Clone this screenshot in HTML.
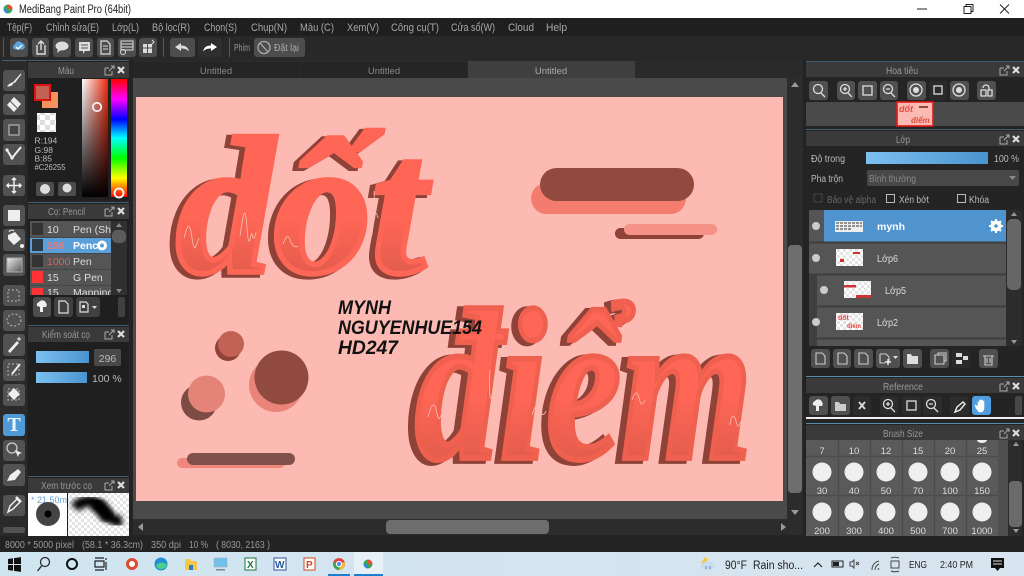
<!DOCTYPE html>
<html><head><meta charset="utf-8"><title>MediBang Paint Pro</title>
<style>
html,body{margin:0;padding:0;width:1024px;height:576px;overflow:hidden;background:#222}
svg{display:block;position:absolute;left:0;top:0}
svg.root{filter:blur(.35px)}
text{font-family:"Liberation Sans","Noto Sans CJK SC",sans-serif;font-size:11px;fill:#a8a8a8}
.h{fill:#9a9a9a;text-anchor:middle;font-size:10px}
.tk{fill:#222;font-size:11.5px}
.n{fill:#ddd;font-size:9.5px;text-anchor:middle}
</style></head><body>
<svg class="root" width="1024" height="576" viewBox="0 0 1024 576" xmlns="http://www.w3.org/2000/svg">
<defs>
<linearGradient id="bl" x1="0" y1="0" x2="1" y2="0"><stop offset="0" stop-color="#7cc0f0"/><stop offset="1" stop-color="#4a94cf"/></linearGradient>
<linearGradient id="sat" x1="0" y1="0" x2="1" y2="0"><stop offset="0" stop-color="#fff"/><stop offset="1" stop-color="#f02a10"/></linearGradient>
<linearGradient id="blk" x1="0" y1="0" x2="0" y2="1"><stop offset="0" stop-color="#000" stop-opacity="0"/><stop offset="1" stop-color="#000"/></linearGradient>
<linearGradient id="hue" x1="0" y1="0" x2="0" y2="1"><stop offset="0" stop-color="#f00"/><stop offset=".17" stop-color="#f0f"/><stop offset=".34" stop-color="#00f"/><stop offset=".5" stop-color="#0ff"/><stop offset=".67" stop-color="#0f0"/><stop offset=".84" stop-color="#ff0"/><stop offset="1" stop-color="#f00"/></linearGradient>
<linearGradient id="g1" x1="0" y1="0" x2="0" y2="1"><stop offset=".55" stop-color="#ff6655"/><stop offset="1" stop-color="#cf5547"/></linearGradient>
<linearGradient id="gr" x1="0" y1="0" x2="1" y2="1"><stop offset="0" stop-color="#eee"/><stop offset="1" stop-color="#555"/></linearGradient>
<linearGradient id="task" x1="0" y1="0" x2="1" y2="0"><stop offset="0" stop-color="#cfe5f0"/><stop offset="1" stop-color="#d8e4ef"/></linearGradient>
<pattern id="chk" width="10" height="10" patternUnits="userSpaceOnUse"><rect width="10" height="10" fill="#fff"/><rect width="5" height="5" fill="#ddd"/><rect x="5" y="5" width="5" height="5" fill="#ddd"/></pattern>
<pattern id="chk2" width="6" height="6" patternUnits="userSpaceOnUse"><rect width="6" height="6" fill="#fff"/><rect width="3" height="3" fill="#e4e4e4"/><rect x="3" y="3" width="3" height="3" fill="#e4e4e4"/></pattern>
<filter id="bl3" x="-20%" y="-20%" width="140%" height="140%"><feGaussianBlur stdDeviation="2.6"/></filter>
<symbol id="pop" overflow="visible"><path d="M0 2h4M0 2v7h7V5M4 5l5-5M6 0h3v3" fill="none" stroke="#aaa" stroke-width="1"/><path d="M13 1l6 6M19 1l-6 6" stroke="#ddd" stroke-width="2.2"/></symbol>
</defs>

<!-- base -->
<rect width="1024" height="576" fill="#232323"/>
<!-- title bar -->
<rect width="1024" height="18" fill="#fff"/>
<circle cx="8" cy="9" r="4.500" fill="#3aa655"/><path d="M8 4.500a4.500 4.500 0 0 1 4.500 4.500H8z" fill="#e8503a"/><path d="M3.500 9a4.500 4.500 0 0 0 4.500 4.500V9z" fill="#2f8fd0"/>
<text x="19" y="13" textLength="112" lengthAdjust="spacingAndGlyphs" style="fill:#222;font-size:11.500px">MediBang Paint Pro (64bit)</text>
<path d="M917 9h10" stroke="#222"/><path d="M964 6.500h7v7h-7zM966 6.500v-2h7v7h-2" fill="none" stroke="#222"/><path d="M1000 4.500l9 9M1009 4.500l-9 9" stroke="#222"/>

<!-- menu -->
<rect y="18" width="1024" height="18" fill="#1f1f1f"/>
<text x="7" y="31" textLength="25" lengthAdjust="spacingAndGlyphs">Tệp(F)</text><text x="46" y="31" textLength="53" lengthAdjust="spacingAndGlyphs">Chỉnh sửa(E)</text><text x="112" y="31" textLength="27" lengthAdjust="spacingAndGlyphs">Lớp(L)</text><text x="152" y="31" textLength="38" lengthAdjust="spacingAndGlyphs">Bộ lọc(R)</text><text x="204" y="31" textLength="33" lengthAdjust="spacingAndGlyphs">Chọn(S)</text><text x="251" y="31" textLength="36" lengthAdjust="spacingAndGlyphs">Chụp(N)</text><text x="300" y="31" textLength="34" lengthAdjust="spacingAndGlyphs">Màu (C)</text><text x="347" y="31" textLength="32" lengthAdjust="spacingAndGlyphs">Xem(V)</text><text x="391" y="31" textLength="48" lengthAdjust="spacingAndGlyphs">Công cụ(T)</text><text x="451" y="31" textLength="44" lengthAdjust="spacingAndGlyphs">Cửa sổ(W)</text><text x="508" y="31" textLength="26" lengthAdjust="spacingAndGlyphs">Cloud</text><text x="546" y="31" textLength="21" lengthAdjust="spacingAndGlyphs">Help</text>

<!-- toolbar -->
<rect y="36" width="1024" height="24" fill="#282828"/>
<path d="M3.500 38v19M163.500 38v19M229.500 38v19" stroke="#3d5f78"/>
<g fill="#4d4d4d">
<rect x="10" y="38" width="18" height="19" rx="3"/><rect x="32" y="38" width="17" height="19" rx="3"/><rect x="53" y="38" width="18" height="19" rx="3"/><rect x="75" y="38" width="18" height="19" rx="3"/><rect x="97" y="38" width="17" height="19" rx="3"/><rect x="118" y="38" width="18" height="19" rx="3"/><rect x="139" y="38" width="18" height="19" rx="3"/><rect x="170" y="38" width="25" height="19" rx="3"/><rect x="198" y="38" width="24" height="19" rx="3" fill="#2f2f2f"/><rect x="254" y="38" width="51" height="19" rx="3"/>
</g>
<path d="M14 49a3 3 0 0 1 1-5 4 4 0 0 1 7-1 3.500 3.500 0 0 1 1 6.500H16z" fill="#5aa5e0"/><path d="M16 47l2 2 4-4" stroke="#fff" fill="none" stroke-width="1.400"/>
<path d="M37 45v9h8v-9M41 50v-9M38 44l3-3 3 3" fill="none" stroke="#ddd" stroke-width="1.400"/>
<ellipse cx="62" cy="46" rx="6.500" ry="4.500" fill="#ddd"/><path d="M58 49l-1 4 4-3z" fill="#ddd"/>
<path d="M79 42h11v9h-5l-2 3v-3h-4z" fill="#ddd"/><path d="M81 45h7M81 48h7" stroke="#555"/>
<path d="M101 41h6l3 3v10h-9z" fill="none" stroke="#ddd" stroke-width="1.200"/><path d="M103 46h5M103 49h5" stroke="#ddd"/>
<path d="M121 41h12v9h-12zM121 44h12M121 47h12" fill="none" stroke="#ddd"/><circle cx="123" cy="52" r="2.500" fill="none" stroke="#ddd"/>
<path d="M143 44h9v9h-9z" fill="#ddd"/><path d="M147.500 44v9M143 48h9" stroke="#4d4d4d"/><path d="M152 40l2 2-3 3" stroke="#ddd" fill="none"/>
<path d="M175 47l6-4v2.500c5 0 7 2 8 6-2-2-4-3-8-3V51z" fill="#ddd"/>
<path d="M217 47l-6-4v2.500c-5 0-7 2-8 6 2-2 4-3 8-3V51z" fill="#fff"/>
<text x="234" y="51" textLength="16" lengthAdjust="spacingAndGlyphs" style="font-size:10px;fill:#999">Phím</text>
<circle cx="264" cy="47.500" r="6" fill="none" stroke="#aaa" stroke-width="1.300"/><path d="M260 43l8 9" stroke="#aaa" stroke-width="1.300"/>
<text x="274" y="51" textLength="25" lengthAdjust="spacingAndGlyphs" style="font-size:10px;fill:#aaa">Đặt lại</text>

<!-- left tool column -->
<rect x="0" y="60" width="27" height="476" fill="#2a2a2a"/>
<rect x="2" y="60" width="25" height="1" fill="#3d5f78"/>
<g fill="#525252">
<rect x="3" y="70" width="22" height="21" rx="3"/><rect x="3" y="94" width="22" height="21" rx="3"/><rect x="3" y="119" width="22" height="22" rx="3"/><rect x="3" y="144" width="22" height="21" rx="3"/><rect x="3" y="175" width="22" height="21" rx="3"/><rect x="3" y="205" width="22" height="21" rx="3"/><rect x="3" y="229" width="22" height="22" rx="3"/><rect x="3" y="254" width="22" height="22" rx="3"/><rect x="3" y="285" width="22" height="21" rx="3"/><rect x="3" y="310" width="22" height="21" rx="3"/><rect x="3" y="334" width="22" height="22" rx="3"/><rect x="3" y="359" width="22" height="22" rx="3"/><rect x="3" y="384" width="22" height="22" rx="3"/><rect x="3" y="414" width="22" height="22" rx="3" fill="#4f9ad6"/><rect x="3" y="440" width="22" height="21" rx="3"/><rect x="3" y="464" width="22" height="22" rx="3"/><rect x="3" y="495" width="22" height="21" rx="3"/><rect x="3" y="527" width="22" height="6" rx="2"/>
</g>
<path d="M8 86c3 0 4-1 5-3l8-9-6 8c-2 1-5 1-7 4z" fill="#eee" stroke="#eee"/>
<path d="M14 97l7 7-7 8-7-7z" fill="#eee"/><path d="M10 101l7 7" stroke="#555"/>
<rect x="9" y="125" width="10" height="10" fill="#444" stroke="#aaa" stroke-width="1.300"/>
<path d="M7 150l5 8 9-11" fill="none" stroke="#eee" stroke-width="2"/><circle cx="7" cy="150" r="1.600" fill="#eee"/><circle cx="12" cy="158" r="1.600" fill="#eee"/>
<path d="M14 178v15M7 185.500h14M12 180l2-2 2 2M12 191l2 2 2-2M9 183.500l-2 2 2 2M19 183.500l2 2-2 2" fill="none" stroke="#eee" stroke-width="1.500"/>
<rect x="8" y="210" width="12" height="11" fill="#eee"/>
<path d="M8 235l7-3 6 7-7 6-6-6z" fill="#eee"/><path d="M9 232a3 3 0 0 1 5-1" fill="none" stroke="#eee"/><circle cx="22" cy="246" r="2" fill="#eee"/>
<rect x="7" y="258" width="15" height="14" fill="url(#gr)" stroke="#aaa"/>
<rect x="8" y="290" width="11" height="11" fill="none" stroke="#bbb" stroke-dasharray="2 2"/>
<ellipse cx="14" cy="320" rx="7" ry="6" fill="none" stroke="#bbb" stroke-dasharray="2 2"/>
<path d="M8 351l9-10 2 2-9 10z" fill="#eee"/><path d="M19 337v4M17 339h4" stroke="#eee"/>
<rect x="8" y="364" width="11" height="11" fill="none" stroke="#bbb" stroke-dasharray="2 2"/><path d="M12 374l8-10" stroke="#eee" stroke-width="2"/>
<rect x="8" y="389" width="11" height="11" fill="none" stroke="#bbb" stroke-dasharray="2 2"/><path d="M14 388l6 6-6 6-6-6z" fill="#eee"/>
<text x="14" y="431" text-anchor="middle" style="font-family:'Liberation Serif',serif;font-size:20px;font-weight:bold;fill:#e8f2fa">T</text>
<circle cx="12" cy="448" r="5" fill="none" stroke="#ccc" stroke-width="1.300"/><path d="M15 450l7 3-3 1-1 3z" fill="#eee"/>
<path d="M7 481l3-6 8-6 3 3-6 8z" fill="#eee"/>
<path d="M8 512l2-6 7-7 3 3-7 7z" fill="none" stroke="#eee" stroke-width="1.500"/><path d="M16 497l5 5" stroke="#eee" stroke-width="2.500"/>

<!-- color panel -->
<rect x="28" y="60" width="101" height="140" fill="#1f1f1f"/>
<rect x="28" y="62" width="101" height="16" fill="#3a3a3a"/><rect x="28" y="60" width="101" height="1" fill="#3d5f78"/>
<text x="58" y="74" textLength="16" lengthAdjust="spacingAndGlyphs" style="font-size:10px;fill:#999">Màu</text><use href="#pop" x="105" y="66"/>
<rect x="42" y="92" width="16" height="16" fill="#f6925e"/>
<rect x="35" y="85" width="15" height="15" fill="#c26255" stroke="#e01010" stroke-width="2"/>
<rect x="37" y="113" width="19" height="19" fill="url(#chk)"/>
<text x="34.500" y="143.500" style="font-size:8.500px;fill:#bbb">R:194</text><text x="34.500" y="153" style="font-size:8.500px;fill:#bbb">G:98</text><text x="34.500" y="161.500" style="font-size:8.500px;fill:#bbb">B:85</text><text x="34.500" y="170" textLength="31" lengthAdjust="spacingAndGlyphs" style="font-size:8.500px;fill:#bbb">#C26255</text>
<rect x="36" y="182" width="18" height="14" rx="2" fill="#4d4d4d"/><rect x="58" y="182" width="18" height="14" rx="2" fill="#4d4d4d"/>
<circle cx="45" cy="189" r="5" fill="#ddd"/><circle cx="67" cy="188" r="4.500" fill="#ddd"/>
<rect x="82" y="79" width="26" height="118" fill="url(#sat)"/><rect x="82" y="79" width="26" height="118" fill="url(#blk)"/>
<rect x="111" y="79" width="16" height="118" fill="url(#hue)"/>
<circle cx="97" cy="107" r="4.200" fill="none" stroke="#eee" stroke-width="1.800"/>
<circle cx="119" cy="193" r="4.500" fill="none" stroke="#eee" stroke-width="2"/>

<!-- brush panel -->
<rect x="28" y="202" width="101" height="120" fill="#1f1f1f"/>
<rect x="28" y="204" width="101" height="15" fill="#3a3a3a"/><rect x="28" y="202" width="101" height="1" fill="#3d5f78"/>
<text x="48" y="215" textLength="37" lengthAdjust="spacingAndGlyphs" style="font-size:10px;fill:#999">Cọ: Pencil</text><use href="#pop" x="105" y="207"/>
<rect x="30" y="221" width="81" height="74" fill="#555"/>
<rect x="30" y="238" width="81" height="15" fill="#5a9fd8"/>
<path d="M30 237.500h81M30 253.500h81M30 269.500h81M30 285.500h81" stroke="#444"/>
<rect x="32" y="223" width="11" height="12" fill="#333"/><rect x="32" y="239" width="11" height="12" fill="#2d3a45"/><rect x="32" y="255" width="11" height="12" fill="#333"/><rect x="32" y="271" width="11" height="12" fill="#f33"/><rect x="32" y="288" width="11" height="7" fill="#f33"/>
<text x="47" y="233" style="fill:#ddd;font-size:10.500px">10</text><text x="73" y="233" style="fill:#ddd;font-size:10.500px">Pen (Sha</text>
<text x="47" y="249" style="fill:#e77;font-size:10.500px;font-weight:bold">296</text><text x="73" y="249" style="fill:#fff;font-size:10.500px;font-weight:bold">Penci</text><circle cx="102" cy="245.500" r="5" fill="#fff"/><circle cx="102" cy="245.500" r="2" fill="#5a9fd8"/>
<text x="47" y="265" style="fill:#c66;font-size:10.500px">1000</text><text x="73" y="265" style="fill:#ddd;font-size:10.500px">Pen</text>
<text x="47" y="281" style="fill:#ddd;font-size:10.500px">15</text><text x="73" y="281" style="fill:#ddd;font-size:10.500px">G Pen</text>
<svg x="30" y="287" width="81" height="8"><text x="17" y="9" style="fill:#ddd;font-size:10.500px">15</text><text x="43" y="9" style="fill:#ddd;font-size:10.500px">Mapping</text></svg>
<rect x="111" y="221" width="16" height="74" fill="#303030"/><rect x="112" y="230" width="14" height="13" rx="5" fill="#5c5c5c"/><path d="M119 223l-3 4h6zM119 293l-3-4h6z" fill="#888"/>
<rect x="33" y="297" width="18" height="20" rx="3" fill="#4d4d4d"/><rect x="54" y="297" width="19" height="20" rx="3" fill="#404040"/><rect x="76" y="297" width="24" height="20" rx="3" fill="#404040"/><rect x="118" y="297" width="7" height="20" rx="2" fill="#404040"/>
<path d="M37 306a3 3 0 0 1 2-4 4 4 0 0 1 7 1 3 3 0 0 1 0 4h-3v5h-3v-5z" fill="#eee"/>
<path d="M59 301h6l3 3v9h-9z" fill="none" stroke="#ddd" stroke-width="1.200"/>
<path d="M80 302h6l2 2v8h-8z" fill="none" stroke="#ddd" stroke-width="1.200"/><rect x="82" y="305" width="3" height="3" fill="#ddd"/><path d="M92 306h5l-2.500 3z" fill="#ddd"/>

<!-- brush control -->
<rect x="28" y="324" width="101" height="152" fill="#1f1f1f"/>
<rect x="28" y="327" width="101" height="15" fill="#3a3a3a"/><rect x="28" y="325" width="101" height="1" fill="#3d5f78"/>
<text x="42" y="338" textLength="48" lengthAdjust="spacingAndGlyphs" style="font-size:10px;fill:#999">Kiểm soát cọ</text><use href="#pop" x="105" y="330"/>
<rect x="36" y="351" width="53" height="12" fill="url(#bl)"/><rect x="94" y="349" width="27" height="17" rx="2" fill="#484848"/><text x="107.500" y="362" text-anchor="middle" style="fill:#bbb;font-size:10.500px">296</text>
<rect x="36" y="372" width="51" height="11" fill="url(#bl)"/><text x="92" y="382" style="fill:#bbb;font-size:10.500px">100 %</text>

<!-- preview -->
<rect x="28" y="476" width="101" height="60" fill="#1f1f1f"/>
<rect x="28" y="478" width="101" height="15" fill="#3a3a3a"/><rect x="28" y="476" width="101" height="1" fill="#3d5f78"/>
<text x="41" y="489" textLength="51" lengthAdjust="spacingAndGlyphs" style="font-size:10px;fill:#999">Xem trước cọ</text><use href="#pop" x="105" y="481"/>
<rect x="28" y="493" width="39" height="43" fill="#fff"/><rect x="68" y="493" width="61" height="43" fill="url(#chk2)"/>
<svg x="28" y="493" width="39" height="14"><text x="3" y="10" style="font-size:9px;fill:#6aa5d8">* 21.50m</text></svg>
<circle cx="48" cy="514" r="12" fill="#444"/><circle cx="48" cy="514" r="3.500" fill="#000"/>
<path d="M75 508c8-10 22-8 27 0s12 14 20 13" fill="none" stroke="#000" stroke-width="11" filter="url(#bl3)"/>
<path d="M92 503c8 2 12 10 18 16" fill="none" stroke="#000" stroke-width="13" filter="url(#bl3)"/>

<!-- center workspace -->
<rect x="133" y="60" width="670" height="18" fill="#2a2a2a"/>
<rect x="133" y="62" width="167" height="16" fill="#252525"/><rect x="301" y="62" width="166" height="16" fill="#252525"/><rect x="468" y="61" width="167" height="17" fill="#3f3f3f"/>
<text x="216" y="74" text-anchor="middle" style="font-size:9.500px;fill:#888">Untitled</text><text x="384" y="74" text-anchor="middle" style="font-size:9.500px;fill:#888">Untitled</text><text x="551" y="74" text-anchor="middle" style="font-size:9.500px;fill:#aaa">Untitled</text>
<rect x="133" y="78" width="670" height="441" fill="#4a4a4a"/>
<rect x="133" y="519" width="655" height="16" fill="#2c2c2c"/><rect x="386" y="520" width="163" height="14" rx="4" fill="#6e6e6e"/><path d="M138 527l5-4v8zM786 527l-5-4v8z" fill="#999"/>
<rect x="787" y="78" width="16" height="457" fill="#2c2c2c"/><rect x="788" y="245" width="14" height="248" rx="4" fill="#6e6e6e"/><path d="M795 82l-4 5h8zM795 515l-4-5h8z" fill="#999"/>

<!-- canvas art -->
<rect x="136" y="97" width="647" height="404" fill="#fdbab3"/>
<rect x="531" y="183" width="155" height="31" rx="15.500" fill="#f47c6e"/>
<rect x="540" y="168" width="154" height="33" rx="16.500" fill="#934a3e"/>
<rect x="615" y="228" width="89" height="11" rx="5.500" fill="#8e4238"/>
<rect x="624" y="224" width="93" height="11" rx="5.500" fill="#f59186"/>
<circle cx="276" cy="385" r="27" fill="#ea8479"/><circle cx="281.500" cy="377.500" r="27" fill="#904a3f"/>
<circle cx="199" cy="402.500" r="18" fill="#7d4a44"/><circle cx="206.500" cy="394" r="18.500" fill="#e48378"/>
<circle cx="228" cy="348" r="13" fill="#8e4238"/><circle cx="231" cy="344" r="13" fill="#c26255"/>
<rect x="177" y="458" width="108" height="10" rx="5" fill="#f0867c"/><rect x="187" y="453" width="108" height="12" rx="6" fill="#80504a"/>

<!-- lettering -->
<text transform="translate(171,274) scale(.93,.93)" style="font-family:'Liberation Serif',serif;font-style:italic;font-weight:bold;font-size:210px;fill:#8e4238;stroke:#8e4238;stroke-width:8">dốt</text>
<text transform="translate(176,272) scale(.93,.93)" style="font-family:'Liberation Serif',serif;font-style:italic;font-weight:bold;font-size:210px;fill:url(#g1);stroke:#ff6655;stroke-width:6">dốt</text>
<text transform="translate(409,460) scale(.75,.96)" style="font-family:'Liberation Serif',serif;font-style:italic;font-weight:bold;font-size:225px;fill:#8e4238;stroke:#8e4238;stroke-width:8">điểm</text>
<text transform="translate(415,458) scale(.75,.96)" style="font-family:'Liberation Serif',serif;font-style:italic;font-weight:bold;font-size:225px;fill:url(#g1);stroke:#f0604f;stroke-width:6">điểm</text>
<g fill="none" stroke="#f8c0b0" stroke-width=".8">
<path d="M184 238c3-12 5-16 7-6s1 12 4 16c2-4 3-8 4-10"/><path d="M240 236c3-20 5-36 7-8s4 2 5 6 2 8 4-2"/><path d="M283 244c3-8 5-10 7-4s6 8 8 6"/><path d="M372 235c2-18 3-30 2-44M372 220c2-8 4-10 6-2"/>
<path d="M428 417c3-12 6-16 8-8s2 14 5 6"/><path d="M490 370c-2 30 2 40 4 12"/><path d="M532 415c3-10 6-12 8-6s3 8 6 2"/><path d="M632 400c3-8 5-10 7-2s3 8 6 2"/><path d="M730 425c1-10 4-12 6-4s3 6 5 0"/>
</g>
<text x="338" y="314" textLength="53" lengthAdjust="spacingAndGlyphs" style="font-size:19px;font-weight:bold;font-style:italic;fill:#111">MYNH</text>
<text x="338" y="334" textLength="144" lengthAdjust="spacingAndGlyphs" style="font-size:19px;font-weight:bold;font-style:italic;fill:#111">NGUYENHUE154</text>
<text x="338" y="354" textLength="60" lengthAdjust="spacingAndGlyphs" style="font-size:19px;font-weight:bold;font-style:italic;fill:#111">HD247</text>

<!-- right panels -->
<rect x="806" y="60" width="218" height="476" fill="#242424"/>
<!-- Navigator -->
<rect x="806" y="61" width="218" height="1" fill="#3d5f78"/><rect x="806" y="62" width="218" height="15" fill="#3a3a3a"/>
<text x="902" y="74" class="h" textLength="32" lengthAdjust="spacingAndGlyphs">Hoa tiêu</text><use href="#pop" x="1000" y="66"/>
<g fill="#505050">
<rect x="809" y="81" width="19" height="19" rx="3"/><rect x="837" y="81" width="18" height="19" rx="3"/><rect x="858" y="81" width="19" height="19" rx="3"/><rect x="880" y="81" width="18" height="19" rx="3"/><rect x="907" y="81" width="19" height="19" rx="3"/><rect x="929" y="81" width="18" height="19" rx="3" fill="#2a2a2a"/><rect x="950" y="81" width="19" height="19" rx="3"/><rect x="977" y="81" width="19" height="19" rx="3"/>
</g>
<g fill="none" stroke="#ddd" stroke-width="1.300">
<circle cx="818" cy="89" r="4.500"/><path d="M821 93l4 4"/><circle cx="845" cy="89" r="4.500"/><path d="M848 93l4 4M843 89h4M845 87v4"/><rect x="863" y="86" width="9" height="9"/><circle cx="888" cy="89" r="4.500"/><path d="M891 93l4 4M886 89h4"/><circle cx="916" cy="90" r="6"/><rect x="934" y="86" width="8" height="8"/><circle cx="959" cy="90" r="6"/><path d="M983 88a3 3 0 0 1 6 0v2M981 90h5v6h-5zM988 90h4v6h-4z"/>
</g>
<circle cx="916" cy="90" r="3" fill="#ddd"/><circle cx="959" cy="90" r="3" fill="#ddd"/>
<rect x="806" y="102" width="218" height="24" fill="#4a4a4a"/>
<rect x="897" y="102" width="36" height="24" fill="#fdbab3" stroke="#e01818" stroke-width="1.600"/>
<text x="899" y="112" style="font-size:9px;font-style:italic;font-weight:bold;fill:#e04c40">dốt</text><text x="911" y="123" style="font-size:8px;font-style:italic;font-weight:bold;fill:#e04c40">điểm</text><rect x="919" y="106" width="9" height="2" fill="#934a3e"/>

<!-- Layer -->
<rect x="806" y="129" width="218" height="1" fill="#3d5f78"/><rect x="806" y="131" width="218" height="15" fill="#3a3a3a"/>
<text x="903" y="143" class="h" textLength="14" lengthAdjust="spacingAndGlyphs">Lớp</text><use href="#pop" x="1000" y="135"/>
<text x="811" y="162" textLength="34" lengthAdjust="spacingAndGlyphs" style="fill:#bbb;font-size:10.500px">Độ trong</text><rect x="866" y="152" width="122" height="12" fill="url(#bl)"/><text x="994" y="162" textLength="25" lengthAdjust="spacingAndGlyphs" style="fill:#bbb;font-size:10.500px">100 %</text>
<text x="811" y="182" textLength="32" lengthAdjust="spacingAndGlyphs" style="fill:#bbb;font-size:10.500px">Pha trộn</text><rect x="867" y="170" width="152" height="16" rx="2" fill="#484848"/><text x="869" y="182" textLength="47" lengthAdjust="spacingAndGlyphs" style="fill:#888;font-size:10.500px">Bình thường</text><path d="M1009 176h7l-3.500 4z" fill="#888"/>
<rect x="814" y="194" width="8" height="8" fill="none" stroke="#444"/><text x="827" y="203" textLength="49" lengthAdjust="spacingAndGlyphs" style="fill:#666;font-size:10px">Bảo vệ alpha</text>
<rect x="886.500" y="194.500" width="8" height="8" fill="none" stroke="#bbb"/><text x="899" y="203" textLength="30" lengthAdjust="spacingAndGlyphs" style="fill:#bbb;font-size:10px">Xén bớt</text>
<rect x="957.500" y="194.500" width="8" height="8" fill="none" stroke="#bbb"/><text x="969" y="203" textLength="20" lengthAdjust="spacingAndGlyphs" style="fill:#bbb;font-size:10px">Khóa</text>
<rect x="809" y="210" width="197" height="136" fill="#555"/>
<rect x="824" y="210" width="182" height="32" fill="#4f94cf"/>
<path d="M809 242.500h197M809 274.500h197M809 306.500h197M809 338.500h197" stroke="#3e3e3e" stroke-width="2"/>
<rect x="809" y="275" width="8" height="63" fill="#3f3f3f"/><rect x="809" y="339" width="8" height="7" fill="#3f3f3f"/>
<circle cx="816" cy="226" r="4" fill="#ccc"/><circle cx="816" cy="258" r="4" fill="#ccc"/><circle cx="824" cy="290" r="4" fill="#ccc"/><circle cx="816" cy="322" r="4" fill="#ccc"/>
<rect x="835" y="221" width="28" height="11" fill="#eee"/><path d="M836 223h26M836 226h26M836 229h16" stroke="#333" stroke-dasharray="3 1"/>
<rect x="836" y="249" width="27" height="17" fill="url(#chk2)"/><rect x="853" y="252" width="7" height="2" fill="#c33"/><rect x="840" y="259" width="4" height="3" fill="#c33"/>
<rect x="844" y="281" width="27" height="17" fill="url(#chk2)"/><rect x="844" y="285" width="12" height="2.500" fill="#c33"/><rect x="856" y="295" width="15" height="3" fill="#c33"/>
<rect x="836" y="313" width="27" height="17" fill="url(#chk2)"/><text x="838" y="320" style="font-size:7px;font-weight:bold;fill:#e44">dốt</text><text x="847" y="328" style="font-size:6px;font-weight:bold;fill:#e44">điểm</text>
<text x="877" y="230" style="fill:#fff;font-size:10.500px;font-weight:bold">mynh</text>
<text x="877" y="262" textLength="21" lengthAdjust="spacingAndGlyphs" style="fill:#ddd;font-size:10.500px">Lớp6</text><text x="885" y="294" textLength="21" lengthAdjust="spacingAndGlyphs" style="fill:#ddd;font-size:10.500px">Lớp5</text><text x="877" y="326" textLength="21" lengthAdjust="spacingAndGlyphs" style="fill:#ddd;font-size:10.500px">Lớp2</text>
<circle cx="996" cy="226" r="4" fill="none" stroke="#fff" stroke-width="3"/><path d="M996 219v14M989 226h14M991 221l10 10M1001 221l-10 10" stroke="#fff" stroke-width="2"/><circle cx="996" cy="226" r="1.800" fill="#4f94cf"/>
<rect x="1006" y="210" width="16" height="136" fill="#2c2c2c"/><rect x="1007" y="219" width="14" height="71" rx="5" fill="#666"/><path d="M1014 212l-3 4h6zM1014 344l-3-4h6z" fill="#999"/>
<!-- layer buttons -->
<g fill="#505050">
<rect x="811" y="349" width="19" height="19" rx="3"/><rect x="833" y="349" width="18" height="19" rx="3"/><rect x="854" y="349" width="19" height="19" rx="3"/><rect x="876" y="349" width="24" height="19" rx="3"/><rect x="903" y="349" width="19" height="19" rx="3"/><rect x="930" y="349" width="19" height="19" rx="3"/><rect x="952" y="349" width="18" height="19" rx="3" fill="#2a2a2a"/><rect x="979" y="349" width="19" height="19" rx="3"/>
</g>
<g fill="none" stroke="#ccc" stroke-width="1.100">
<path d="M816 353h6l3 3v8h-9zM838 353h6l3 3v8h-9zM859 353h6l3 3v8h-9zM880 354h6l3 3v5M880 354v9h5"/><path d="M935 355h9v9h-9zM938 355v-2h8v8h-2"/><path d="M983 356h11M985 356v9h7v-9M987 358v5M990 358v5"/>
</g>
<path d="M885 362h6M888 359v6" stroke="#eee" stroke-width="1.400"/><path d="M893 356h5l-2.500 3z" fill="#ddd"/>
<path d="M907 354h4l1 2h6v8h-11z" fill="#ddd"/>
<rect x="956" y="353" width="6" height="4" fill="#ddd"/><rect x="956" y="360" width="6" height="4" fill="#ddd"/><rect x="963" y="356" width="5" height="4" fill="#ddd"/>

<!-- Reference -->
<rect x="806" y="376" width="218" height="1" fill="#5a8cb0"/><rect x="806" y="378" width="218" height="15" fill="#3a3a3a"/>
<text x="903" y="390" class="h" textLength="40" lengthAdjust="spacingAndGlyphs">Reference</text><use href="#pop" x="1000" y="382"/>
<g fill="#505050">
<rect x="809" y="396" width="19" height="19" rx="3"/><rect x="831" y="396" width="19" height="19" rx="3"/><rect x="853" y="396" width="18" height="19" rx="3" fill="#2c2c2c"/><rect x="880" y="396" width="18" height="19" rx="3" fill="#2c2c2c"/><rect x="902" y="396" width="19" height="19" rx="3" fill="#2c2c2c"/><rect x="923" y="396" width="19" height="19" rx="3" fill="#2c2c2c"/><rect x="950" y="396" width="19" height="19" rx="3" fill="#2c2c2c"/><rect x="972" y="396" width="19" height="19" rx="3" fill="#4f9ee0"/><rect x="1015" y="396" width="7" height="19" rx="2" fill="#484848"/>
</g>
<path d="M813 405a3 3 0 0 1 2-4 4 4 0 0 1 7 1 3 3 0 0 1 0 4h-3v5h-3v-5z" fill="#eee"/>
<path d="M835 402h4l1 2h6v7h-11z" fill="#ccc"/>
<path d="M859 402l6 7M865 402l-6 7" stroke="#ddd" stroke-width="1.800"/>
<g fill="none" stroke="#ddd" stroke-width="1.300"><circle cx="888" cy="404" r="4.500"/><path d="M891 408l4 4M886 404h4M888 402v4"/><rect x="907" y="401" width="9" height="9"/><circle cx="931" cy="404" r="4.500"/><path d="M934 408l4 4M929 404h4"/></g>
<path d="M955 412l2-5 6-5 2 2-5 6z" fill="none" stroke="#eee" stroke-width="1.400"/>
<path d="M978 407v-5h1.500v4V400h1.500v5V400h1.500v5v-4h1.500v7c0 2-1 4-3 4h-2l-3-4-1-3 2 1z" fill="#fff" stroke="#fff" stroke-width=".6"/>
<rect x="806" y="417" width="218" height="2" fill="#eee"/>

<!-- Brush size -->
<rect x="806" y="423" width="218" height="1" fill="#5a8cb0"/><rect x="806" y="425" width="218" height="15" fill="#3a3a3a"/>
<text x="903" y="437" class="h" textLength="40" lengthAdjust="spacingAndGlyphs">Brush Size</text><use href="#pop" x="1000" y="429"/>
<rect x="806" y="440" width="192" height="96" fill="#5a5a5a"/>
<path d="M838.500 440v96M870.500 440v96M902.500 440v96M934.500 440v96M966.500 440v96M806 456.500h192M806 495.500h192" stroke="#4c4c4c" stroke-width="1.500"/>
<rect x="998" y="440" width="10" height="96" fill="#505050"/>
<rect x="1008" y="440" width="14" height="96" fill="#2c2c2c"/><rect x="1009" y="481" width="13" height="46" rx="4" fill="#6a6a6a"/><path d="M1016 442l-3 4h6zM1016 533l-3-4h6z" fill="#999"/>
<text x="822" y="454" class="n">7</text><text x="854" y="454" class="n">10</text><text x="886" y="454" class="n">12</text><text x="918" y="454" class="n">15</text><text x="950" y="454" class="n">20</text><text x="982" y="454" class="n">25</text>
<text x="822" y="494" class="n">30</text><text x="854" y="494" class="n">40</text><text x="886" y="494" class="n">50</text><text x="918" y="494" class="n">70</text><text x="950" y="494" class="n">100</text><text x="982" y="494" class="n">150</text>
<text x="822" y="534" class="n">200</text><text x="854" y="534" class="n">300</text><text x="886" y="534" class="n">400</text><text x="918" y="534" class="n">500</text><text x="950" y="534" class="n">700</text><text x="982" y="534" class="n">1000</text>
<g fill="#efefef">
<circle cx="822" cy="472" r="9.500"/><circle cx="854" cy="472" r="9.500"/><circle cx="886" cy="472" r="9.500"/><circle cx="918" cy="472" r="9.500"/><circle cx="950" cy="472" r="9.500"/><circle cx="982" cy="472" r="9.500"/>
<circle cx="822" cy="512" r="9.500"/><circle cx="854" cy="512" r="9.500"/><circle cx="886" cy="512" r="9.500"/><circle cx="918" cy="512" r="9.500"/><circle cx="950" cy="512" r="9.500"/><circle cx="982" cy="512" r="9.500"/>
<path d="M977 440h10a5 3 0 0 1-10 0z"/></g>

<!-- status -->
<rect y="536" width="1024" height="16" fill="#232323"/>
<text x="5" y="548" textLength="69" lengthAdjust="spacingAndGlyphs" style="font-size:10px;fill:#999">8000 * 5000 pixel</text><text x="82" y="548" textLength="61" lengthAdjust="spacingAndGlyphs" style="font-size:10px;fill:#999">(58.1 * 36.3cm)</text><text x="151" y="548" textLength="30" lengthAdjust="spacingAndGlyphs" style="font-size:10px;fill:#999">350 dpi</text><text x="189" y="548" textLength="19" lengthAdjust="spacingAndGlyphs" style="font-size:10px;fill:#999">10 %</text><text x="216" y="548" textLength="54" lengthAdjust="spacingAndGlyphs" style="font-size:10px;fill:#999">( 8030, 2163 )</text>

<!-- taskbar -->
<rect y="552" width="1024" height="24" fill="url(#task)"/>
<rect x="354" y="552" width="29" height="24" fill="#e6f0f6"/>
<rect x="328" y="574" width="22" height="2" fill="#1a7fd0"/><rect x="354" y="574" width="29" height="2" fill="#1a7fd0"/>
<path d="M8 559l5-.7v5.700H8zM14 558.100l7-1v6.900h-7zM8 565h5v5.700l-5-.7zM14 565h7v6.900l-7-1z" fill="#111"/>
<circle cx="45" cy="562" r="4.500" fill="none" stroke="#222" stroke-width="1.200"/><path d="M41.500 566l-4 5" stroke="#222" stroke-width="1.400"/>
<circle cx="72" cy="564" r="5" fill="none" stroke="#111" stroke-width="2"/>
<path d="M95 558h9M95 570h9M95 561h9v6h-9zM106 558v2M106 562v8" fill="none" stroke="#222" stroke-width="1.200"/>
<circle cx="132" cy="564" r="6" fill="#e04a30"/><circle cx="132" cy="564" r="3" fill="#fff"/>
<circle cx="161" cy="564" r="6.500" fill="#1c8fd8"/><path d="M156 566c2-4 8-5 11-1-1 3-5 5-8 4" fill="#4fd08a"/>
<path d="M185 559h5l1 2h6v9h-12z" fill="#f3c84a"/><rect x="189" y="565" width="4" height="5" fill="#2f7fc0"/>
<rect x="214" y="558" width="13" height="9" fill="#6fc0ea" stroke="#aac" stroke-width=".6"/><rect x="216" y="569" width="9" height="1.500" fill="#789"/>
<rect x="245" y="558" width="11" height="12" fill="#fff" stroke="#1f7244"/><text x="247" y="568" style="font-size:10px;font-weight:bold;fill:#1f7244">X</text>
<rect x="274" y="558" width="12" height="12" fill="#fff" stroke="#2b5797"/><text x="275" y="568" style="font-size:10px;font-weight:bold;fill:#2b5797">W</text>
<rect x="304" y="558" width="11" height="12" fill="#fff" stroke="#d04423"/><text x="306" y="568" style="font-size:10px;font-weight:bold;fill:#d04423">P</text>
<circle cx="339" cy="564" r="6" fill="#e0453a"/><path d="M339 564l5.500-2a6 6 0 0 1-5 8z" fill="#f6c12f"/><path d="M339 564l0 6a6 6 0 0 1-5.500-8z" fill="#3aa655"/><circle cx="339" cy="564" r="2.600" fill="#4a8fe8" stroke="#fff"/>
<circle cx="368" cy="564" r="4.500" fill="#3aa655"/><path d="M368 559.500a4.500 4.500 0 0 1 4.500 4.500H368z" fill="#e8503a"/><path d="M363.500 564a4.500 4.500 0 0 0 4.500 4.500V564z" fill="#2f8fd0"/>
<!-- tray -->
<path d="M701 563l4-6 3 2-3 5z" fill="#f3c84a"/><ellipse cx="708" cy="566" rx="7" ry="4.500" fill="#c8dcec"/><path d="M706 566v3M710 566v3" stroke="#4a90d0"/>
<text x="725" y="569" class="tk" textLength="22" lengthAdjust="spacingAndGlyphs">90°F</text><text x="753" y="569" class="tk" textLength="50" lengthAdjust="spacingAndGlyphs">Rain sho...</text>
<path d="M814 567l4-4 4 4" fill="none" stroke="#222" stroke-width="1.200"/>
<rect x="832" y="561" width="11" height="6" fill="none" stroke="#222"/><rect x="833" y="562" width="6" height="4" fill="#222"/>
<path d="M850 562h2l2-2v8l-2-2h-2z" fill="none" stroke="#444"/><path d="M856 562l3 3M859 562l-3 3" stroke="#444"/>
<path d="M872 570c0-5 3-8 7-9M875 570c0-3 2-5 4-6M878 570l1-2" fill="none" stroke="#444"/>
<rect x="891" y="561" width="8" height="7" fill="none" stroke="#444"/><path d="M891 558c2-1 6-1 8 0M891 571c2 1 6 1 8 0" fill="none" stroke="#444"/>
<text x="909" y="568" class="tk" textLength="18" lengthAdjust="spacingAndGlyphs" style="font-size:10px">ENG</text>
<text x="940" y="568" class="tk" textLength="33" lengthAdjust="spacingAndGlyphs" style="font-size:10.500px">2:40 PM</text>
<path d="M991 558h13v10h-4l-2.500 3-2.500-3h-4z" fill="#111"/><path d="M993 561h9M993 564h9" stroke="#ddd"/>
</svg>
</body></html>
